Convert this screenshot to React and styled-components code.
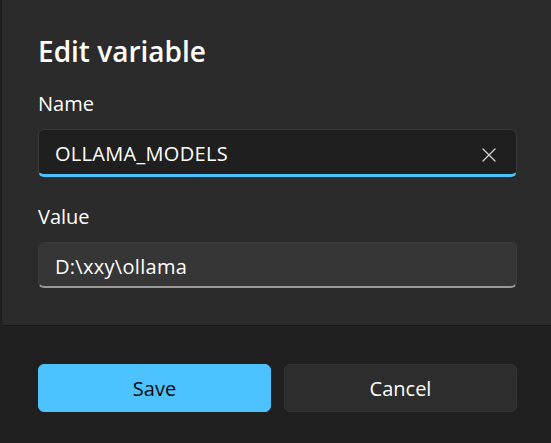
import React from "react";
import styled, { createGlobalStyle } from "styled-components";

const Global = createGlobalStyle`
  html, body { margin: 0; padding: 0; background: #2b2b2b; }
  body { font-family: "Open Sans", "Noto Sans", "Liberation Sans", sans-serif; color: #ffffff; }
  * { box-sizing: border-box; }
`;

const Dialog = styled.div`
  width: 551px;
  height: 443px;
  display: flex;
  flex-direction: column;
  border-left: 2px solid #1f1f1f;
  overflow: hidden;
`;

const Content = styled.div`
  background: #2b2b2b;
  padding: 33px 34px 37px 36px;
  display: flex;
  flex-direction: column;
`;

const Title = styled.h1`
  margin: 0 0 21px;
  font-size: 28px;
  line-height: 36px;
  font-weight: 600;
  color: #ffffff;
`;

const Field = styled.div`
  display: flex;
  flex-direction: column;
  gap: 12px;
  & + & { margin-top: 26px; }
`;

const Label = styled.label`
  font-size: 20px;
  line-height: 27px;
  color: #ffffff;
`;

const InputBox = styled.div`
  display: flex;
  align-items: flex-start;
  height: ${p => (p.$focused ? "48px" : "46px")};
  padding: 10px 20px 0 16px;
  border-radius: 6px;
  background: ${p => (p.$focused ? "#1f1f1f" : "#363636")};
  border: 1px solid ${p => (p.$focused ? "#383838" : "#3b3b3b")};
  border-bottom: ${p => (p.$focused ? "3px solid #4cc2ff" : "2px solid #9a9a9a")};
`;

const InputText = styled.span`
  flex: 1;
  font-size: 20px;
  line-height: 27px;
  letter-spacing: 0.3px;
  color: #ffffff;
  white-space: nowrap;
`;

const ClearButton = styled.span`
  display: flex;
  align-items: center;
  justify-content: center;
  width: 14px;
  height: 27px;
  margin-top: 1px;
  color: #cfcfcf;
`;

const Footer = styled.div`
  flex: 1;
  background: #202020;
  border-top: 1px solid #1a1a1a;
  padding: 38px 34px 0 36px;
  display: grid;
  grid-template-columns: 1fr 1fr;
  column-gap: 13px;
  align-items: start;
`;

const Button = styled.button`
  height: 48px;
  border-radius: 6px;
  font-family: inherit;
  font-size: 20px;
  display: flex;
  align-items: center;
  justify-content: center;
  padding: 0;
  cursor: pointer;
  background: ${p => (p.$primary ? "#4cc2ff" : "#2d2d2d")};
  color: ${p => (p.$primary ? "#0a0a0a" : "#ffffff")};
  border: 1px solid ${p => (p.$primary ? "#4cc2ff" : "#343434")};
`;

const XIcon = () => (
  <svg width="14" height="14" viewBox="0 0 14 14" fill="none">
    <path d="M1 1L13 13M13 1L1 13" stroke="currentColor" strokeWidth="1.4" strokeLinecap="round" />
  </svg>
);

export default function App() {
  return (
    <>
      <Global />
      <Dialog>
        <Content>
          <Title>Edit variable</Title>
          <Field>
            <Label>Name</Label>
            <InputBox $focused>
              <InputText>OLLAMA_MODELS</InputText>
              <ClearButton>
                <XIcon />
              </ClearButton>
            </InputBox>
          </Field>
          <Field>
            <Label>Value</Label>
            <InputBox>
              <InputText>D:\xxy\ollama</InputText>
            </InputBox>
          </Field>
        </Content>
        <Footer>
          <Button $primary>Save</Button>
          <Button>Cancel</Button>
        </Footer>
      </Dialog>
    </>
  );
}
